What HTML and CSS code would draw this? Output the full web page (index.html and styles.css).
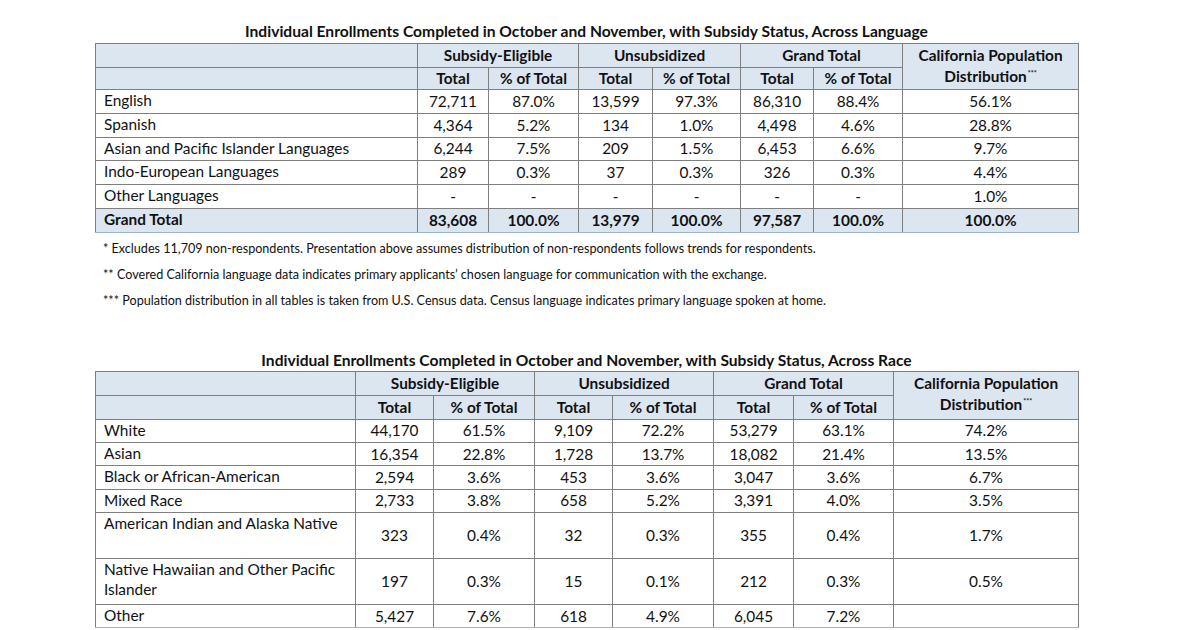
FILE: index.html
```html
<!DOCTYPE html>
<html>
<head>
<meta charset="utf-8">
<link rel="stylesheet" href="styles.css">
</head>
<body>
<div class="page">
  <section class="block lang">
    <h2 class="title">Individual Enrollments Completed in October and November, with Subsidy Status, Across Language</h2>
    <table class="data t1">
      <colgroup>
        <col class="c-label"><col class="c-a"><col class="c-b"><col class="c-c"><col class="c-d"><col class="c-e"><col class="c-f"><col class="c-g">
      </colgroup>
      <thead>
        <tr class="h1">
          <th></th>
          <th colspan="2">Subsidy-Eligible</th>
          <th colspan="2">Unsubsidized</th>
          <th colspan="2">Grand Total</th>
          <th rowspan="2" class="pop">California Population<br>Distribution<sup>***</sup></th>
        </tr>
        <tr class="h2">
          <th></th>
          <th>Total</th><th>% of Total</th>
          <th>Total</th><th>% of Total</th>
          <th>Total</th><th>% of Total</th>
        </tr>
      </thead>
      <tbody>
        <tr><td class="label">English</td><td>72,711</td><td>87.0%</td><td>13,599</td><td>97.3%</td><td>86,310</td><td>88.4%</td><td>56.1%</td></tr>
        <tr><td class="label">Spanish</td><td>4,364</td><td>5.2%</td><td>134</td><td>1.0%</td><td>4,498</td><td>4.6%</td><td>28.8%</td></tr>
        <tr><td class="label">Asian and Pacific Islander Languages</td><td>6,244</td><td>7.5%</td><td>209</td><td>1.5%</td><td>6,453</td><td>6.6%</td><td>9.7%</td></tr>
        <tr><td class="label">Indo-European Languages</td><td>289</td><td>0.3%</td><td>37</td><td>0.3%</td><td>326</td><td>0.3%</td><td>4.4%</td></tr>
        <tr><td class="label">Other Languages</td><td>-</td><td>-</td><td>-</td><td>-</td><td>-</td><td>-</td><td>1.0%</td></tr>
        <tr class="total"><td class="label">Grand Total</td><td>83,608</td><td>100.0%</td><td>13,979</td><td>100.0%</td><td>97,587</td><td>100.0%</td><td>100.0%</td></tr>
      </tbody>
    </table>
    <div class="notes">
      <p>* Excludes 11,709 non-respondents. Presentation above assumes distribution of non-respondents follows trends for respondents.</p>
      <p>** Covered California language data indicates primary applicants’ chosen language for communication with the exchange.</p>
      <p>*** Population distribution in all tables is taken from U.S. Census data. Census language indicates primary language spoken at home.</p>
    </div>
  </section>

  <section class="block race">
    <h2 class="title">Individual Enrollments Completed in October and November, with Subsidy Status, Across Race</h2>
    <table class="data t2">
      <colgroup>
        <col class="c-label"><col class="c-a"><col class="c-b"><col class="c-c"><col class="c-d"><col class="c-e"><col class="c-f"><col class="c-g">
      </colgroup>
      <thead>
        <tr class="h1">
          <th></th>
          <th colspan="2">Subsidy-Eligible</th>
          <th colspan="2">Unsubsidized</th>
          <th colspan="2">Grand Total</th>
          <th rowspan="2" class="pop">California Population<br>Distribution<sup>***</sup></th>
        </tr>
        <tr class="h2">
          <th></th>
          <th>Total</th><th>% of Total</th>
          <th>Total</th><th>% of Total</th>
          <th>Total</th><th>% of Total</th>
        </tr>
      </thead>
      <tbody>
        <tr><td class="label">White</td><td>44,170</td><td>61.5%</td><td>9,109</td><td>72.2%</td><td>53,279</td><td>63.1%</td><td>74.2%</td></tr>
        <tr><td class="label">Asian</td><td>16,354</td><td>22.8%</td><td>1,728</td><td>13.7%</td><td>18,082</td><td>21.4%</td><td>13.5%</td></tr>
        <tr><td class="label">Black or African-American</td><td>2,594</td><td>3.6%</td><td>453</td><td>3.6%</td><td>3,047</td><td>3.6%</td><td>6.7%</td></tr>
        <tr><td class="label">Mixed Race</td><td>2,733</td><td>3.8%</td><td>658</td><td>5.2%</td><td>3,391</td><td>4.0%</td><td>3.5%</td></tr>
        <tr class="tall"><td class="label">American Indian and Alaska Native</td><td>323</td><td>0.4%</td><td>32</td><td>0.3%</td><td>355</td><td>0.4%</td><td>1.7%</td></tr>
        <tr class="tall"><td class="label">Native Hawaiian and Other Pacific Islander</td><td>197</td><td>0.3%</td><td>15</td><td>0.1%</td><td>212</td><td>0.3%</td><td>0.5%</td></tr>
        <tr><td class="label">Other</td><td>5,427</td><td>7.6%</td><td>618</td><td>4.9%</td><td>6,045</td><td>7.2%</td><td></td></tr>
      </tbody>
    </table>
  </section>
</div>
</body>
</html>
```

FILE: styles.css
```css
html, body {
  margin: 0;
  padding: 0;
  background: #ffffff;
}

body {
  width: 1200px;
  height: 630px;
  overflow: hidden;
  font-family: Lato, "Open Sans", "Liberation Sans", sans-serif;
  color: #111111;
}

.page {
  padding: 22px 0 0 95px;
  width: 983px;
}

.title {
  margin: 0 0 3px 0;
  font-size: 15.6px;
  line-height: 18px;
  font-weight: bold;
  text-align: center;
  white-space: nowrap;
  color: #111111;
}

.race {
  margin-top: 37px;
}

.race .title {
  margin-bottom: 2px;
}

.data {
  border-collapse: collapse;
  table-layout: fixed;
  width: 983px;
  font-size: 15.4px;
}

.data th,
.data td {
  border: 1px solid #7f7f7f;
  padding: 0 0 1px 0;
  text-align: center;
  vertical-align: middle;
  line-height: 20px;
  white-space: nowrap;
}

.data th {
  background: #dce6f1;
  font-weight: bold;
}

.data td.label {
  text-align: left;
  padding-left: 8px;
  vertical-align: top;
  padding-top: 0;
  white-space: normal;
}

.data .pop {
  line-height: 21px;
  white-space: nowrap;
  padding-bottom: 2px;
}

.data .pop sup {
  font-size: 7px;
  line-height: 0;
  vertical-align: 6px;
  margin-left: 1px;
}

.data tbody tr:last-child td {
  border-bottom-color: #9fb3cc;
}

.data tr.total td {
  background: #dce6f1;
  font-weight: bold;
  border-bottom-color: #7f7f7f;
}

/* table 1 */
.t1 .c-label { width: 322px; }
.t1 .c-a { width: 71px; }
.t1 .c-b { width: 90px; }
.t1 .c-c { width: 74px; }
.t1 .c-d { width: 88px; }
.t1 .c-e { width: 73px; }
.t1 .c-f { width: 89px; }
.t1 .c-g { width: 176px; }

.t1 tr.h1 { height: 24px; }
.t1 tr.h2 { height: 22px; }
.t1 tbody tr { height: 23.8px; }

/* table 2 */
.t2 .c-label { width: 260px; }
.t2 .c-a { width: 78px; }
.t2 .c-b { width: 101px; }
.t2 .c-c { width: 78px; }
.t2 .c-d { width: 101px; }
.t2 .c-e { width: 80px; }
.t2 .c-f { width: 100px; }
.t2 .c-g { width: 185px; }

.t2 tr.h1 { height: 24px; }
.t2 tr.h2 { height: 24px; }
.t2 tbody tr { height: 23.3px; }
.t2 tbody tr.tall { height: 46px; }

.notes {
  margin-top: 3px;
  padding-left: 8px;
}

.notes p {
  margin: 0;
  font-size: 12.6px;
  line-height: 26px;
  white-space: nowrap;
}
```
